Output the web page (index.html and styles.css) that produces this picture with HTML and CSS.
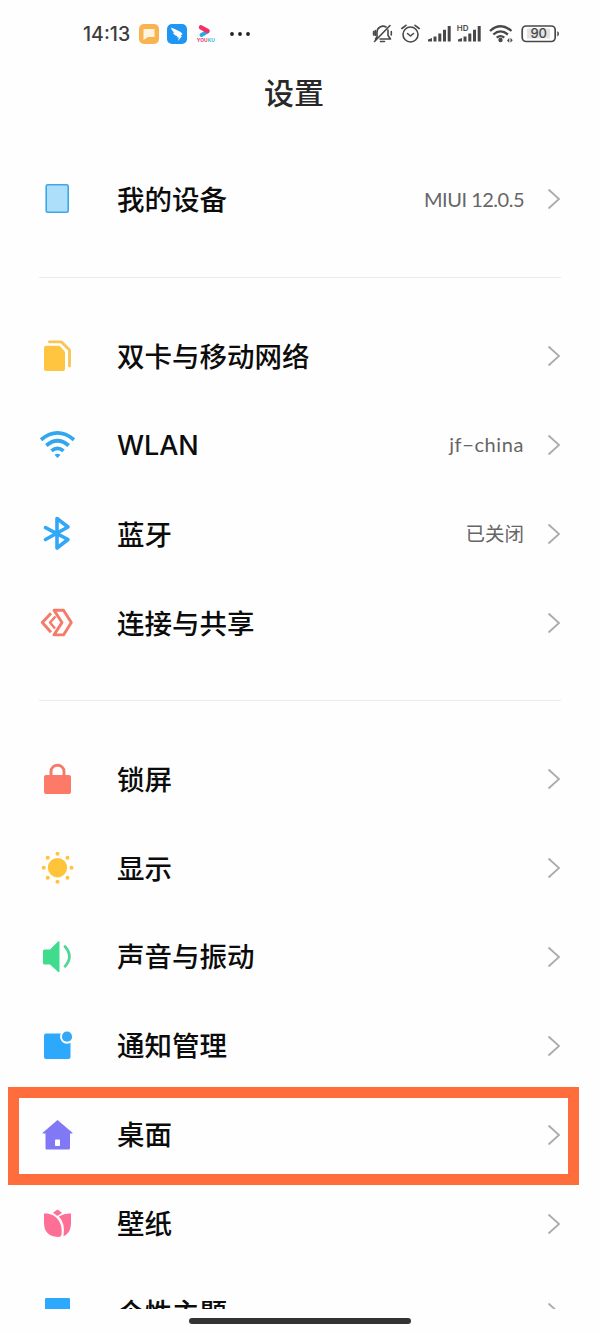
FILE: index.html
```html
<!DOCTYPE html>
<html lang="zh-CN">
<head>
<meta charset="utf-8">
<title>设置</title>
<link rel="stylesheet" href="styles.css">
</head>
<body>
<svg class="defs" width="0" height="0"><defs><symbol id="chevron" viewBox="0 0 14 22"><path d="M1.500 1.500 12 11 1.500 20.500" fill="none" stroke="#ababab" stroke-width="1.800"/></symbol></defs></svg>
<div class="screen">
  <header class="status">
    <div class="status-left">
      <span class="clock">14:13</span>
      <svg class="app" viewBox="0 0 20 20"><rect width="20" height="20" rx="5" fill="#f9b44f"/><path d="M4.500 5h11v8H9l-4.500 3z" fill="#fff4df"/></svg>
      <svg class="app" viewBox="0 0 20 20"><rect width="20" height="20" rx="5" fill="#1e96f5"/><path d="M4 3.500c4 2 9 3 11.500 6.500L13.500 12h1.500l-4 5 .8-3.500-2-.3.700-1C7.500 11.500 6 9.500 6 8.500l2 .3C5.500 7.500 4.300 5.500 4 3.500z" fill="#fff"/></svg>
      <svg class="app" viewBox="0 0 20 20"><path d="M6.500 11 12.500 7.700" stroke="#2aa9e8" stroke-width="3.800" stroke-linecap="round"/><path d="M6 3.300 12.500 7" stroke="#f52f62" stroke-width="4.400" stroke-linecap="round"/><text class="youku" x="1.800" y="17.700"><tspan fill="#e8416e">YOU</tspan><tspan fill="#38b6dc">KU</tspan></text></svg>
      <svg class="more" viewBox="0 0 22 6"><g fill="#222"><circle cx="3" cy="3" r="1.900"/><circle cx="11" cy="3" r="1.900"/><circle cx="19" cy="3" r="1.900"/></g></svg>
    </div>
    <svg class="status-icons" viewBox="372 20 188 28">
      <g fill="none" stroke="#484848" stroke-width="1.600" stroke-linecap="round" stroke-linejoin="round">
        <path d="M377 37.500V32a6 6 0 0 1 9-5M388 30V35.500l2.500 3.500H380M380.500 41.500h4M373.600 31.500v3.500M375.300 30.500v5M391.300 31.500v3.500M374.500 41.500 390 25.500M377 37l-1.500 2"/>
        <circle cx="410.500" cy="34.500" r="7.500"/><path d="M407.500 33.500 410.500 36 413.500 33.500M401.800 28.500 406 25.300M419.200 28.500 415 25.300"/>
      </g>
      <g fill="#484848">
        <path d="M428 41.500V39.500L432 38v3.500zM433.500 36.500h3v5h-3zM438.300 33.500h3v8h-3zM443 29.800h3v11.700h-3zM447.700 26h3v15.500h-3z"/>
        <path d="M458 41.500V39.500L462 38v3.500zM463.500 36.500h3v5h-3zM468.300 33.500h3v8h-3zM473 29.800h3v11.700h-3zM477.700 26h3v15.500h-3z"/>
        <text class="hd" x="456.800" y="31">HD</text>
        <circle cx="500.500" cy="40" r="2.200"/><path d="M509.300 37.700v5l-2.300-2.300zM510.500 37.700v5l2.200-2.500z"/>
        <path d="M557.300 31.200q1.700.3 1.700 2.600t-1.700 2.600z"/>
      </g>
      <path d="M490 31q10.500-9.500 21.500 0M493.300 34.500q7.200-6.300 14.600 0M496.700 37.700q3.800-3.200 7.600 0" fill="none" stroke="#484848" stroke-width="2.300"/>
      <rect x="527" y="28.500" width="23" height="10" fill="#e3e3e3"/>
      <rect x="522.200" y="26" width="33" height="15.500" rx="4" fill="none" stroke="#484848" stroke-width="1.700"/>
      <text class="battery" x="538.700" y="38.400" text-anchor="middle">90</text>
    </svg>
  </header>
  <h1 class="title">设置</h1>
  <main class="list">
    <section class="group group-device">
      <div class="row">
        <svg class="icon" viewBox="0 0 36 36"><rect x="7.200" y="3.700" width="22" height="27.600" rx="1.500" fill="#addefa" stroke="#3ca7e9" stroke-width="1.600"/></svg>
        <span class="label">我的设备</span><span class="value version">MIUI 12.0.5</span><svg class="arrow"><use href="#chevron"/></svg>
      </div>
    </section>
    <section class="group">
      <div class="row">
        <svg class="icon" viewBox="0 0 36 36"><path d="M7 7.700h13.500l5.500 6V31q0 2-2 2H7q-2 0-2-2V9.700q0-2 2-2z" fill="#ffc440"/><path d="M10.500 3.900H22.500L30.500 12V28" fill="none" stroke="#f9c556" stroke-width="2.900" stroke-linecap="round" stroke-linejoin="round"/></svg>
        <span class="label">双卡与移动网络</span><svg class="arrow"><use href="#chevron"/></svg>
      </div>
      <div class="row">
        <svg class="icon" viewBox="0 0 36 36"><path d="M2 12.800Q18.500-1 35 12.800M7.300 18.500Q18.500 9 29.700 18.500M12.500 23.900Q18.500 18.800 24.500 23.900" fill="none" stroke="#31a8ed" stroke-width="3.800"/><path d="M15.500 27.800Q18.500 25.600 21.500 27.800L18.500 31z" fill="#31a8ed"/></svg>
        <span class="label latin">WLAN</span><span class="value network">jf−china</span><svg class="arrow"><use href="#chevron"/></svg>
      </div>
      <div class="row">
        <svg class="icon" viewBox="0 0 36 36"><path d="M6.500 11.700 29 23.500 18 32V2.500L29 11 6.500 23.500" fill="none" stroke="#31a8f7" stroke-width="3.600" stroke-linecap="round" stroke-linejoin="round"/></svg>
        <span class="label">蓝牙</span><span class="value off">已关闭</span><svg class="arrow"><use href="#chevron"/></svg>
      </div>
      <div class="row">
        <svg class="icon" viewBox="0 0 36 36"><g fill="none" stroke="#f47b6b" stroke-width="2.900" stroke-linejoin="round"><path d="M15 5.200H24.500L32.300 17.500 24.500 29.900H15L23 17.500z"/><path d="M12 8.200 3.300 17.500 12 27.200"/><path d="M16.500 11.500 11 17.500 16 23.500" stroke-width="2.500"/></g></svg>
        <span class="label">连接与共享</span><svg class="arrow"><use href="#chevron"/></svg>
      </div>
    </section>
    <section class="group group-display">
      <div class="row">
        <svg class="icon" viewBox="0 0 36 36"><rect x="5" y="14" width="27" height="19" rx="2" fill="#fc7a67"/><path d="M12 15V10.500a6.500 6.300 0 0 1 13 0V15" fill="none" stroke="#f57b69" stroke-width="2.900"/></svg>
        <span class="label">锁屏</span><svg class="arrow"><use href="#chevron"/></svg>
      </div>
      <div class="row">
        <svg class="icon" viewBox="0 0 36 36"><g fill="#ffc43a"><circle cx="18.500" cy="17.700" r="9.700"/><circle cx="18.500" cy="3.700" r="2"/><circle cx="18.500" cy="31.700" r="2"/><circle cx="4.700" cy="17.700" r="2"/><circle cx="32.500" cy="17.700" r="2"/><circle cx="8.700" cy="7.700" r="2"/><circle cx="28.500" cy="7.700" r="2"/><circle cx="8.700" cy="27.700" r="2"/><circle cx="28.500" cy="27.700" r="2"/></g></svg>
        <span class="label">显示</span><svg class="arrow"><use href="#chevron"/></svg>
      </div>
      <div class="row">
        <svg class="icon" viewBox="0 0 36 36"><path d="M5.500 10.500H11L19 2.500q1.500-1 1.500.8V32q0 1.800-1.500.8L11 25.500H5.500Q4 25.500 4 24V12q0-1.500 1.500-1.500z" fill="#40dc8d"/><path d="M26 7.500Q34.800 17.500 26 27.300" fill="none" stroke="#4fd798" stroke-width="2.700" stroke-linecap="round"/></svg>
        <span class="label">声音与振动</span><svg class="arrow"><use href="#chevron"/></svg>
      </div>
      <div class="row">
        <svg class="icon" viewBox="0 0 36 36"><rect x="5" y="5.500" width="26.500" height="25.500" rx="2" fill="#2ca8fc"/><circle cx="28" cy="8.700" r="7" fill="#fdfefe"/><circle cx="28" cy="8.700" r="5.100" fill="#35a9f6"/></svg>
        <span class="label">通知管理</span><svg class="arrow"><use href="#chevron"/></svg>
      </div>
      <div class="row marked">
        <svg class="icon" viewBox="0 0 36 36"><path d="M18.500 3 33.500 15.700q.8.800-.5.800H31V31q0 1.500-1.500 1.500h-22Q6.500 32.500 6.500 31V16.500H4q-1.200 0-.3-.8z" fill="#8078f4"/><rect x="16" y="22.500" width="5" height="6.500" rx=".8" fill="#fff"/></svg>
        <span class="label">桌面</span><svg class="arrow"><use href="#chevron"/></svg>
      </div>
      <div class="row">
        <svg class="icon" viewBox="0 0 36 36"><g fill="#fe6f96"><path d="M18.500 3.500 23 6.700 18.500 10 14 6.700z"/><path d="M5 7.500C15 7 24 14 22.500 28.500Q22.200 31 19 31C9 30.500 5 25 5 16.500z"/><path d="M19.800 10.500Q26 6.800 32 7.500V16.500C32 23 30 28 24.500 30.200Q26.500 17 19.800 10.500z"/></g></svg>
        <span class="label">壁纸</span><svg class="arrow"><use href="#chevron"/></svg>
      </div>
      <div class="row">
        <svg class="icon" viewBox="0 0 36 36"><rect x="6" y="3" width="25" height="30" rx="1.200" fill="#2ca8fc"/></svg>
        <span class="label">个性主题</span><svg class="arrow"><use href="#chevron"/></svg>
      </div>
    </section>
  </main>
  <footer class="nav"><div class="home-bar"></div></footer>
</div>
</body>
</html>
```
FILE: styles.css
```css
* { box-sizing: border-box; }
body { margin: 0; background: #fefefe; font-family: "Noto Sans CJK SC", sans-serif; color: #0c0c0c; }
.defs { display: block; }
.screen { display: flex; flex-direction: column; width: 600px; height: 1333px; overflow: hidden; }
.status { display: flex; justify-content: space-between; align-items: center; flex: none; height: 68px; padding: 0 40px 0 83px; }
.status-left { display: flex; align-items: center; }
.clock { width: 56px; font: 500 19.500px/28px Inter, sans-serif; color: #3c3c3c; }
.app { width: 20px; height: 20px; margin-right: 8px; }
.more { width: 22px; height: 6px; margin-left: 6px; }
.status-icons { width: 188px; height: 28px; }
.youku { font: bold 5px Inter, sans-serif; }
.hd { font: 600 8px Inter, sans-serif; }
.battery { font: 500 13px Inter, sans-serif; fill: #484848; }
.title { flex: none; height: 52px; margin: 0; padding-right: 12px; font-size: 30px; font-weight: 500; line-height: 47px; text-align: center; color: #282828; }
.list { flex: none; height: 1189px; padding: 35px 39px 0; overflow: hidden; }
.group { padding: 34px 0 33px; border-top: 1px solid #ececec; }
.group-device { padding: 0 0 33px; border-top: 0; }
.group-display { padding-top: 33.300px; }
.row { display: flex; align-items: center; height: 88.900px; }
.icon { flex: none; width: 36px; height: 36px; margin-right: 42px; }
.label { flex: 1; padding-bottom: 3px; font-size: 27.500px; font-weight: 500; line-height: 40px; }
.latin { padding-bottom: 0; font-family: Inter, sans-serif; font-size: 27px; line-height: 42px; padding-top: 2px; letter-spacing: -.1px; }
.value { padding-bottom: 1px; font-family: Lato, "Noto Sans CJK SC", sans-serif; font-size: 20px; color: #666; }
.version { letter-spacing: -.5px; }
.network { padding-bottom: 3px; letter-spacing: .6px; }
.off { padding-bottom: 3px; font-size: 19.500px; }
.arrow { flex: none; width: 14px; height: 22px; margin-left: 23px; }
.marked { position: relative; }
.marked::after { content: ""; position: absolute; inset: -3px -18px -6px -31px; border: 11px solid #ff6d3d; }
.nav { display: flex; justify-content: center; flex: 1; padding: 9px 0 0; }
.home-bar { width: 222px; height: 6px; border-radius: 3px; background: #333; }
```
